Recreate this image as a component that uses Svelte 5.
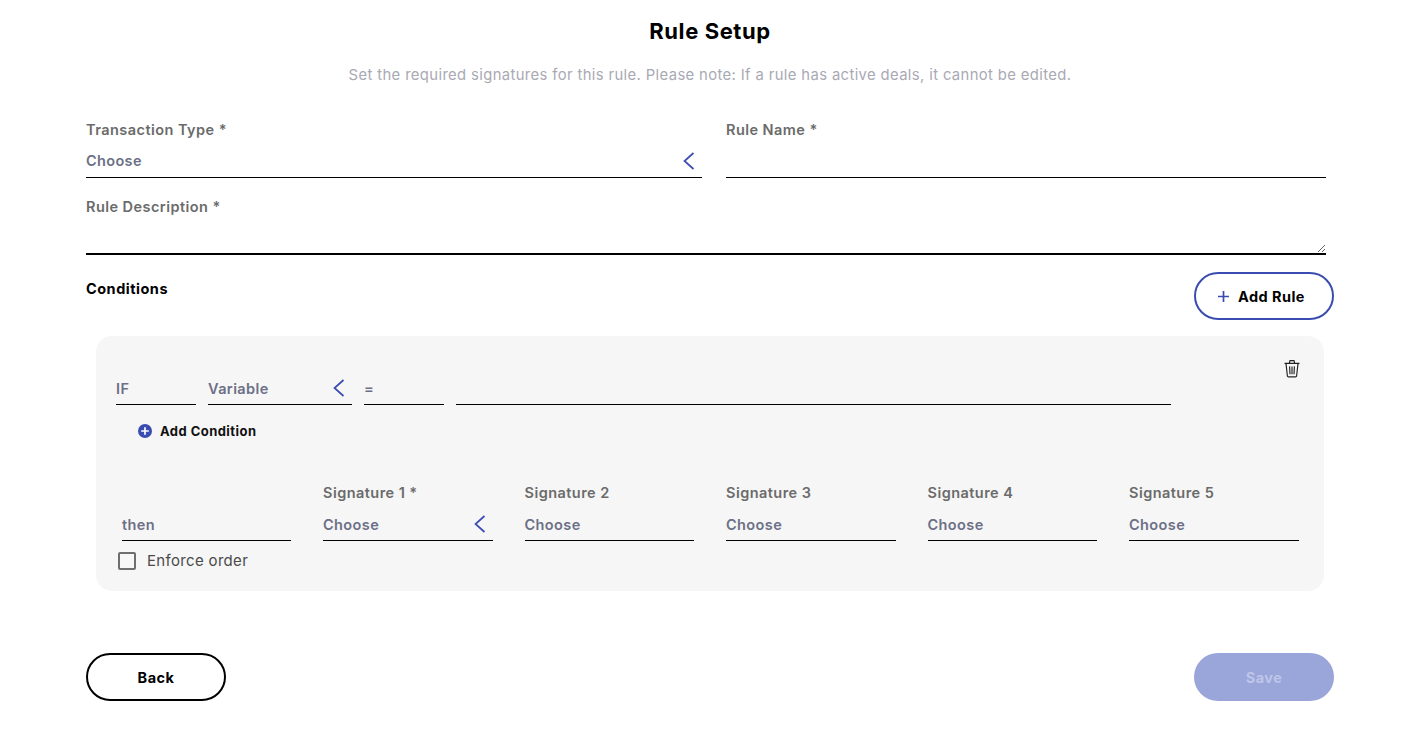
<script lang="ts">
	// Rule setup form. Only the first signature is required and gets a chevron.
	const signatures = [
		{ label: 'Signature 1 *', chevron: true },
		{ label: 'Signature 2', chevron: false },
		{ label: 'Signature 3', chevron: false },
		{ label: 'Signature 4', chevron: false },
		{ label: 'Signature 5', chevron: false }
	];
	let enforceOrder = $state(false);
	let ruleName = $state('');
	let description = $state('');
</script>

{#snippet chevron()}
	<svg class="chevron" width="12" height="18" viewBox="0 0 12 18" fill="none" aria-hidden="true">
		<path d="M10.5 1 1.5 9l9 8" stroke="#3b4cb0" stroke-width="1.7" />
	</svg>
{/snippet}

<main>
	<h1>Rule Setup</h1>
	<p class="sub">Set the required signatures for this rule. Please note: If a rule has active deals, it cannot be edited.</p>

	<div class="fields">
		<div class="top-grid">
			<div class="field">
				<span class="label">Transaction Type *</span>
				<div class="select"><span>Choose</span>{@render chevron()}</div>
			</div>
			<label class="field">
				<span class="label">Rule Name *</span>
				<input type="text" bind:value={ruleName} />
			</label>
		</div>
		<label class="field desc">
			<span class="label">Rule Description *</span>
			<textarea bind:value={description}></textarea>
		</label>
	</div>

	<div class="cond-head">
		<h2>Conditions</h2>
		<button class="btn add-rule">
			<svg class="plus" width="11" height="11" viewBox="0 0 11 11" aria-hidden="true">
				<path d="M5.5 0v11M0 5.5h11" stroke="#3b4cb0" stroke-width="1.7" />
			</svg>
			Add Rule
		</button>
	</div>

	<section class="card">
		<button class="trash" aria-label="Delete">
			<svg width="18" height="19" viewBox="0 0 18 19" fill="none" stroke="#222" stroke-width="1.15">
				<path d="M1.5 4.4h15M6.4 4 7 1.6h4l.6 2.4" />
				<path d="M3 4.6 4.4 17a1 1 0 0 0 1 .9h7.2a1 1 0 0 0 1-.9L15 4.6" />
				<path d="M6.6 7.4l.4 7.8M9 7.4v7.8M11.4 7.4l-.4 7.8" />
			</svg>
		</button>
		<div class="if-row">
			<div class="cell if">IF</div>
			<div class="cell variable"><span>Variable</span>{@render chevron()}</div>
			<div class="cell eq">=</div>
			<div class="cell value"></div>
		</div>
		<button class="add-cond">
			<svg width="14" height="14" viewBox="0 0 14 14" aria-hidden="true">
				<circle cx="7" cy="7" r="7" fill="#3b4cb0" />
				<path d="M7 3.2v7.6M3.2 7h7.6" stroke="#fff" stroke-width="1.7" />
			</svg>
			Add Condition
		</button>
		<div class="sig-row">
			<div class="cell then">then</div>
			{#each signatures as sig}
				<div class="sig">
					<span class="label">{sig.label}</span>
					<div class="cell sig-select">
						<span>Choose</span>
						{#if sig.chevron}{@render chevron()}{/if}
					</div>
				</div>
			{/each}
		</div>
		<label class="check">
			<input type="checkbox" bind:checked={enforceOrder} />
			<span>Enforce order</span>
		</label>
	</section>

	<footer>
		<button class="btn back">Back</button>
		<button class="btn save">Save</button>
	</footer>
</main>

<style>
	:global(body) {
		margin: 0;
		background: #fff;
		font-family: Inter, 'Liberation Sans', sans-serif;
		color: #000;
	}

	main {
		padding: 17px 67px 0 86px;
		height: 715px;
	}

	h1 {
		margin: 0;
		font-size: 22px;
		line-height: 28px;
		font-weight: 700;
		letter-spacing: 0.6px;
		text-align: center;
	}

	.sub {
		margin: 20px 0 0;
		font-size: 14.8px;
		line-height: 20px;
		letter-spacing: 0.38px;
		color: #a9a9b4;
		text-align: center;
	}

	.fields {
		margin-top: 35px;
		padding-right: 8px;
	}

	.top-grid {
		display: grid;
		grid-template-columns: 616px 600px;
		gap: 24px;
	}

	.field {
		display: block;
	}

	.label {
		display: block;
		font-size: 14.5px;
		line-height: 20px;
		font-weight: 600;
		letter-spacing: 0.45px;
		color: #6b6b6b;
	}

	.select {
		display: flex;
		align-items: center;
		justify-content: space-between;
		height: 35px;
		padding-right: 7px;
		border-bottom: 1px solid #000;
		box-sizing: border-box;
		margin-top: 3px;
		font-size: 14.5px;
		font-weight: 600;
		letter-spacing: 0.35px;
		color: #6c7086;
	}

	.select .chevron {
		margin-top: 2px;
	}

	input[type='text'] {
		display: block;
		width: 100%;
		height: 35px;
		margin-top: 3px;
		border: 0;
		border-bottom: 1px solid #000;
		box-sizing: border-box;
		outline: 0;
		background: transparent;
	}

	.desc {
		margin-top: 19px;
	}

	textarea {
		display: block;
		width: 100%;
		height: 38px;
		margin-top: 0;
		border: 0;
		border-bottom: 2px solid #000;
		box-sizing: border-box;
		outline: 0;
	}

	.cond-head {
		display: flex;
		justify-content: space-between;
		align-items: flex-start;
		margin-top: 17px;
	}

	h2 {
		margin: 7px 0 0;
		font-size: 14.5px;
		line-height: 20px;
		font-weight: 700;
		letter-spacing: 0.5px;
	}

	.btn {
		width: 140px;
		height: 48px;
		border-radius: 24px;
		box-sizing: border-box;
		font: inherit;
		font-size: 14.5px;
		font-weight: 700;
		letter-spacing: 0.45px;
		padding: 0;
	}

	.add-rule {
		background: #fff;
		border: 2px solid #3b4cb0;
		color: #000;
		padding-right: 5px;
	}

	.plus {
		margin-right: 5px;
	}

	.card {
		position: relative;
		width: 1228px;
		height: 255px;
		margin: 16px 0 0 10px;
		padding: 0 26px 0 20px;
		box-sizing: border-box;
		background: #f6f6f6;
		border-radius: 16px;
	}

	.trash {
		position: absolute;
		top: 23px;
		right: 23px;
		padding: 0;
		border: 0;
		background: none;
		line-height: 0;
	}

	.if-row {
		display: flex;
		gap: 12px;
		padding-top: 36px;
		width: 1055px;
	}

	.cell {
		display: flex;
		align-items: center;
		justify-content: space-between;
		height: 33px;
		border-bottom: 1px solid #000;
		box-sizing: border-box;
		font-size: 14.5px;
		font-weight: 600;
		letter-spacing: 0.4px;
		color: #6c7086;
	}

	.if,
	.eq {
		width: 80px;
		flex: none;
	}

	.variable {
		width: 144px;
		flex: none;
		padding-right: 7px;
	}

	.value {
		flex: 1;
	}

	.add-cond {
		display: flex;
		align-items: center;
		gap: 8px;
		margin: 16px 0 0 22px;
		padding: 0;
		border: 0;
		background: none;
		font: inherit;
		font-size: 13px;
		font-weight: 700;
		letter-spacing: 0.45px;
		color: #111;
		line-height: 20px;
	}

	.sig-row {
		display: flex;
		align-items: flex-end;
		gap: 32px;
		margin-top: 42px;
		margin-left: 6px;
	}

	.then {
		width: 169px;
		flex: none;
	}

	.sig {
		flex: 0 0 169.5px;
	}

	.sig-select {
		margin-top: 5px;
		padding-right: 7px;
	}

	.check {
		display: flex;
		align-items: center;
		gap: 11px;
		margin: 10px 0 0 2px;
		font-size: 15px;
		line-height: 20px;
		letter-spacing: 0.33px;
		color: #4a4a4a;
	}

	.check input {
		appearance: none;
		width: 18px;
		height: 18px;
		margin: 0;
		border: 2px solid #6e6e6e;
		border-radius: 2px;
		box-sizing: border-box;
	}

	footer {
		display: flex;
		justify-content: space-between;
		margin-top: 62px;
	}

	.back {
		background: #fff;
		border: 2px solid #000;
		color: #000;
	}

	.save {
		background: #9aa5d9;
		border: 0;
		color: #bec6e9;
	}
</style>
